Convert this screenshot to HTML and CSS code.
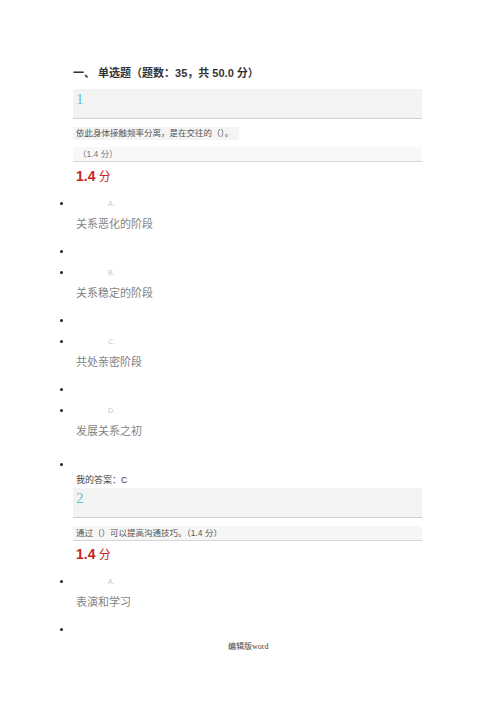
FILE: index.html
```html
<!DOCTYPE html>
<html lang="zh">
  <head>
    <meta charset="UTF-8" />
    <title>单选题</title>
    <link rel="stylesheet" href="styles.css">
  </head>
  <body>
    <main class="page">
      <h1 class="part">一、 单选题（题数：35，共 50.0 分）</h1>

      <section class="question">
        <div class="qnum">1</div>
        <p class="qtext"><span>依此身体接触频率分离，是在交往的（）。</span></p>
        <p class="qscore">（1.4 分）</p>
        <p class="got"><b>1.4</b> 分</p>
        <ul class="opts">
          <li><span class="key">A.</span><p>关系恶化的阶段</p></li>
          <li class="blank"></li>
          <li><span class="key">B.</span><p>关系稳定的阶段</p></li>
          <li class="blank"></li>
          <li><span class="key">C.</span><p>共处亲密阶段</p></li>
          <li class="blank"></li>
          <li><span class="key">D.</span><p>发展关系之初</p></li>
          <li class="blank last"></li>
        </ul>
        <p class="answer">我的答案：C</p>
      </section>

      <section class="question">
        <div class="qnum">2</div>
        <p class="qline">通过（）可以提高沟通技巧。（1.4 分）</p>
        <p class="got second"><b>1.4</b> 分</p>
        <ul class="opts">
          <li><span class="key">A.</span><p>表演和学习</p></li>
          <li class="blank"></li>
        </ul>
      </section>
    </main>
    <p class="footer">编辑版word</p>
  </body>
</html>
```

FILE: styles.css
```css
body {
  margin: 0;
  padding: 0;
  background-color: #ffffff;
  font-family: "Liberation Sans", "Noto Sans CJK SC", sans-serif;
  color: #555555;
}

.page {
  margin-left: 73px;
  width: 349px;
  padding-top: 66px;
}

.part {
  margin: 0 0 9px 0;
  font-size: 11px;
  line-height: 14px;
  font-weight: bold;
  color: #333333;
}

.qnum {
  height: 29px;
  background-color: #f3f3f3;
  border-bottom: 1px solid #cfcfcf;
  padding-left: 3px;
  font-family: "Liberation Serif", serif;
  font-size: 15px;
  line-height: 20px;
  color: #5cc3d9;
}

.qtext {
  margin: 8px 0 7px 0;
  font-size: 8.5px;
  line-height: 13px;
}

.qtext span {
  display: inline-block;
  padding: 0 6px 0 3px;
  background-color: #f4f4f4;
}

.qscore {
  margin: 0;
  padding-left: 5px;
  font-size: 8.5px;
  line-height: 14px;
  color: #777777;
  background-color: #f8f8f8;
  border-bottom: 1px solid #d6d6d6;
}

.qline {
  margin: 8px 0 0 0;
  padding-left: 3px;
  font-size: 8.5px;
  line-height: 14px;
  color: #555555;
  background-color: #f6f6f6;
  border-bottom: 1px solid #d6d6d6;
}

.got {
  margin: 5px 0 0 0;
  padding-left: 3px;
  font-size: 12px;
  line-height: 19px;
  color: #cc2222;
}

.got b {
  font-size: 14px;
}

.got.second {
  margin-top: 4px;
}

.opts {
  margin: 7px 0 0 0;
  padding-left: 0;
  font-size: 11px;
  list-style: disc;
  color: #222222;
}

.opts li {
  padding-left: 3px;
}

.opts li.blank {
  height: 19px;
}

.opts li.last {
  height: 21px;
  line-height: 24px;
}

.key {
  display: block;
  height: 20px;
  line-height: 20px;
  padding-left: 32px;
  font-size: 7px;
  color: #c4c4c4;
}

.opts p {
  margin: 0 0 10px 0;
  font-size: 11px;
  line-height: 20px;
  color: #838383;
}

.answer {
  margin: 0;
  padding-left: 3px;
  font-size: 9px;
  line-height: 16px;
  color: #444444;
}

.footer {
  margin: 0;
  padding-left: 228px;
  font-family: "Liberation Serif", "Noto Sans CJK SC", serif;
  font-size: 8px;
  line-height: 12px;
  color: #444444;
}
```
